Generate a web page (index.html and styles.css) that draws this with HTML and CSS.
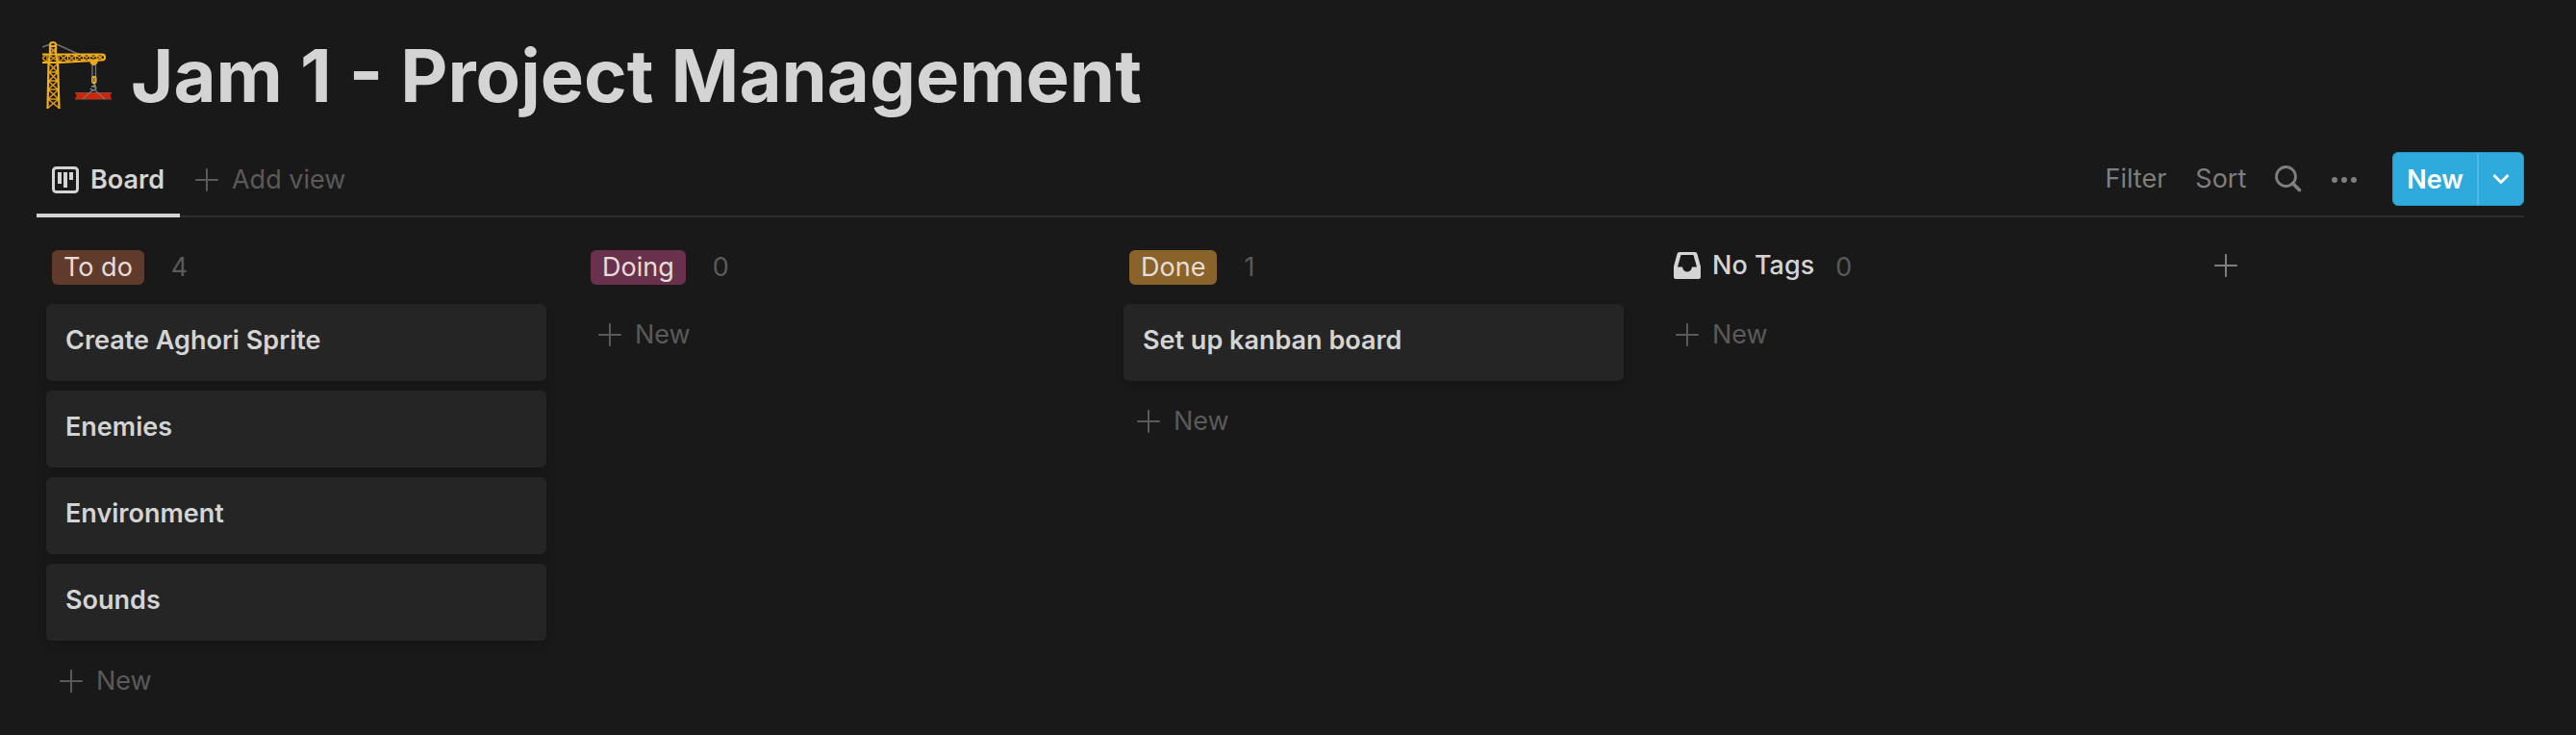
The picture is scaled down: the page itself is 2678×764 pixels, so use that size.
FILE: index.html
```
<!DOCTYPE html>
<html lang="en">
<head>
    <meta charset="UTF-8">
    <meta name="viewport" content="width=device-width, initial-scale=1.0">
    <title>Jam 1 - Project Management</title>
    <link rel="stylesheet" href="styles.css">
</head>
<body>

    <!-- Shared icon shapes -->
    <svg class="sprite" aria-hidden="true">
        <symbol id="plus" viewBox="0 0 24 24">
            <path d="M12 1v22M1 12h22" fill="none" stroke="currentColor" stroke-width="2" stroke-linecap="round"/>
        </symbol>
    </svg>

    <header class="page-header">
        <svg class="page-icon" viewBox="0 0 72 72" aria-hidden="true">
            <path d="M0 7L8 4M15 4L39 15" fill="none" stroke="#6f6f6f" stroke-width="1.500"/>
            <!-- mast -->
            <path d="M8 7l7 7M15 7l-7 7M7 24l9 9M16 24l-9 9M7 33l9 9M16 33l-9 9M6 42l10 9M16 42l-10 9M6 51l11 10M17 51l-11 10M6 61l11 9M17 61l-11 9M7 33h9M7 42h9M6 51h10M6 61h11" fill="none" stroke="#e0a01c" stroke-width="1.500"/>
            <path d="M5.500 71L6.500 23L8 14V5q0-3 3-3t3 3v9l2 9 1.500 48M8 6h6" fill="none" stroke="#f0ae1c" stroke-width="2.200"/>
            <!-- arm -->
            <path d="M-4 15l8 7M4 15l-8 7M7 15l9 7M16 15l-9 7M18 15l8 7M26 15l-8 7M27 15l7 7M34 15l-7 7M35 15l7 6M42 15l-7 6M43 15l6 6M49 15l-6 6M50 15l6 6M56 15l-6 6M57 15l6 5M63 15l-6 5M5 14v9M17 14v9M26.500 14v8M34.500 14v8M42.500 14v7M49.500 14v7M56.500 14v7" fill="none" stroke="#e0a01c" stroke-width="1.400"/>
            <path d="M0 14.500h62q3 0 3 3t-3 3L18 23H0" fill="none" stroke="#f0ae1c" stroke-width="2.200"/>
            <path d="M49 21h9l-1 3-2 2h-3l-2-2z" fill="#e9a820"/>
            <!-- rope, hook and beam -->
            <path d="M52 26v12M55.500 26v12" stroke="#777" stroke-width="1.300"/>
            <rect x="51" y="37" width="5.500" height="8" rx="2" fill="#e9b020"/>
            <path d="M52 39l3 4M55 39l-3 4" stroke="#6a4d10" stroke-width="1"/>
            <path d="M54 45v3q3 1 1 3t-5-1M51 48l5-1" fill="none" stroke="#8a8a8a" stroke-width="1.600"/>
            <path d="M34 54l1.500 3.500L34 61h38l-1.500-3.500L72 54z" fill="#d32300"/>
            <path d="M34 54.500h38M34 61h38" stroke="#8a4a40" stroke-width="1.200"/>
            <path d="M53 51L42 61M54 51l11 10" fill="none" stroke="#777" stroke-width="1.200"/>
        </svg>
        <h1>Jam 1 - Project Management</h1>
    </header>

    <nav class="toolbar">
        <div class="views">
            <button class="view active">
                <svg class="icon-lg" viewBox="0 0 28 28" aria-hidden="true">
                    <rect x="1.500" y="1.500" width="25" height="25" rx="3" fill="none" stroke="currentColor" stroke-width="3"/>
                    <path d="M6 6h4v12H6zM12 6h4v16h-4zM18 6h4v8h-4z" fill="currentColor"/>
                </svg>
                Board
            </button>
            <button class="view add">
                <svg class="icon" aria-hidden="true"><use href="#plus"/></svg>
                Add view
            </button>
        </div>
        <div class="actions">
            <button>Filter</button>
            <button>Sort</button>
            <button aria-label="Search">
                <svg class="icon-lg" viewBox="0 0 28 28" aria-hidden="true">
                    <circle cx="11.500" cy="11.500" r="10" fill="none" stroke="currentColor" stroke-width="2.800"/>
                    <path d="M18.500 18.500L25.500 25.500" stroke="currentColor" stroke-width="3.800" stroke-linecap="round"/>
                </svg>
            </button>
            <button aria-label="More">
                <svg class="icon-lg" viewBox="0 0 28 28" aria-hidden="true">
                    <path d="M4 15h0M14 15h0M24 15h0" stroke="currentColor" stroke-width="6" stroke-linecap="round"/>
                </svg>
            </button>
            <div class="new-group">
                <button class="new-main">New</button>
                <button class="new-menu" aria-label="New options">
                    <svg class="chevron" viewBox="0 0 18 12" aria-hidden="true">
                        <path d="M1.500 2l7.500 7.500L16.500 2" fill="none" stroke="currentColor" stroke-width="2.800"/>
                    </svg>
                </button>
            </div>
        </div>
    </nav>

    <main class="board">
        <section class="column">
            <div class="column-header">
                <h2 class="tag brown">To do</h2>
                <span class="count">4</span>
            </div>
            <article class="card">Create Aghori Sprite</article>
            <article class="card">Enemies</article>
            <article class="card">Environment</article>
            <article class="card">Sounds</article>
            <button class="add-card"><svg class="icon" aria-hidden="true"><use href="#plus"/></svg>New</button>
        </section>

        <section class="column">
            <div class="column-header">
                <h2 class="tag pink">Doing</h2>
                <span class="count">0</span>
            </div>
            <button class="add-card"><svg class="icon" aria-hidden="true"><use href="#plus"/></svg>New</button>
        </section>

        <section class="column">
            <div class="column-header">
                <h2 class="tag yellow">Done</h2>
                <span class="count">1</span>
            </div>
            <article class="card">Set up kanban board</article>
            <button class="add-card"><svg class="icon" aria-hidden="true"><use href="#plus"/></svg>New</button>
        </section>

        <section class="column">
            <div class="column-header">
                <h2 class="no-tags">
                    <svg class="icon-lg" viewBox="0 0 28 28" aria-hidden="true">
                        <path fill="currentColor" fill-rule="evenodd" d="M6 0h16q2 0 2.500 2L28 15v11q0 2-2 2H2q-2 0-2-2V15L3.500 2Q4 0 6 0zM7.500 3L4 15.500h5q1 5 5 5t5-5h5L20.500 3z"/>
                    </svg>
                    No Tags
                </h2>
                <span class="count">0</span>
            </div>
            <button class="add-card"><svg class="icon" aria-hidden="true"><use href="#plus"/></svg>New</button>
        </section>

        <button class="add-column" aria-label="Add a group">
            <svg class="icon" aria-hidden="true"><use href="#plus"/></svg>
        </button>
    </main>

</body>
</html>
```
FILE: styles.css
```
* {
    box-sizing: border-box;
}

body {
    font-family: Inter, "Liberation Sans", sans-serif;
    font-size: 27px;
    line-height: 36px;
    margin: 0;
    padding: 30px 54px 24px 38px;
    background-color: #191919;
    color: #d4d4d4;
}

h1,
h2 {
    margin: 0;
    font-size: inherit;
    font-weight: 400;
}

button {
    display: flex;
    align-items: center;
    padding: 0;
    border: none;
    background: none;
    color: inherit;
    font: inherit;
    cursor: pointer;
}

.sprite {
    position: absolute;
    width: 0;
    height: 0;
}

.icon {
    width: 24px;
    height: 24px;
}

.icon-lg {
    width: 28px;
    height: 28px;
}

/* Title */
.page-header {
    display: flex;
    align-items: center;
    gap: 20px;
    padding-left: 6px;
}

.page-icon {
    width: 72px;
    height: 72px;
}

.page-header h1 {
    font-size: 76px;
    font-weight: 700;
    line-height: 96px;
}

/* View tabs and actions */
.toolbar {
    display: flex;
    justify-content: space-between;
    margin-top: 20px;
    border-bottom: 2px solid #2f2f2f;
}

.views,
.actions {
    display: flex;
    align-items: center;
}

.view {
    height: 80px;
    gap: 12px;
    padding: 6px 16px 0;
    margin-bottom: -2px;
    border-bottom: 4px solid transparent;
}

.view.active {
    border-bottom-color: #d4d4d4;
    font-weight: 600;
}

.view.add {
    gap: 14px;
    color: #5a5a5a;
}

.actions {
    gap: 30px;
    padding-top: 2px;
    color: #7f7f7f;
}

.new-group {
    display: flex;
    height: 56px;
    margin-left: 6px;
    border: 1px solid #2596c4;
    border-radius: 6px;
    background-color: #2eaadc;
    color: white;
}

.new-main {
    padding: 2px 14px 0;
    font-weight: 600;
}

.new-menu {
    padding: 0 14px;
    border-left: 2px solid #4fb7e1;
}

.chevron {
    width: 18px;
    height: 12px;
}

/* Board */
.board {
    display: flex;
    align-items: flex-start;
    gap: 40px;
    padding: 14px 0 0 10px;
}

.column {
    display: flex;
    flex-direction: column;
    gap: 10px;
    width: 520px;
}

.column-header {
    display: flex;
    align-items: center;
    gap: 22px;
    height: 66px;
    padding: 10px 6px 0;
}

.tag {
    margin-right: 6px;
    padding: 0 12px;
    border-radius: 6px;
    color: #e6dcd8;
}

.brown {
    background-color: #603b2c;
}

.pink {
    background-color: #69314c;
}

.yellow {
    background-color: #89632a;
}

.no-tags {
    display: flex;
    align-items: center;
    gap: 12px;
    padding: 0 0 4px 6px;
    font-weight: 500;
}

.count {
    color: #5a5a5a;
}

.card {
    padding: 20px;
    height: 80px;
    border-radius: 6px;
    background-color: #252525;
    box-shadow: 0 4px 8px rgba(0, 0, 0, 0.2);
    font-weight: 600;
}

.add-card {
    gap: 14px;
    height: 64px;
    padding: 0 14px;
    color: #5a5a5a;
}

.add-column {
    justify-content: center;
    width: 52px;
    height: 72px;
    color: #7f7f7f;
}
```
